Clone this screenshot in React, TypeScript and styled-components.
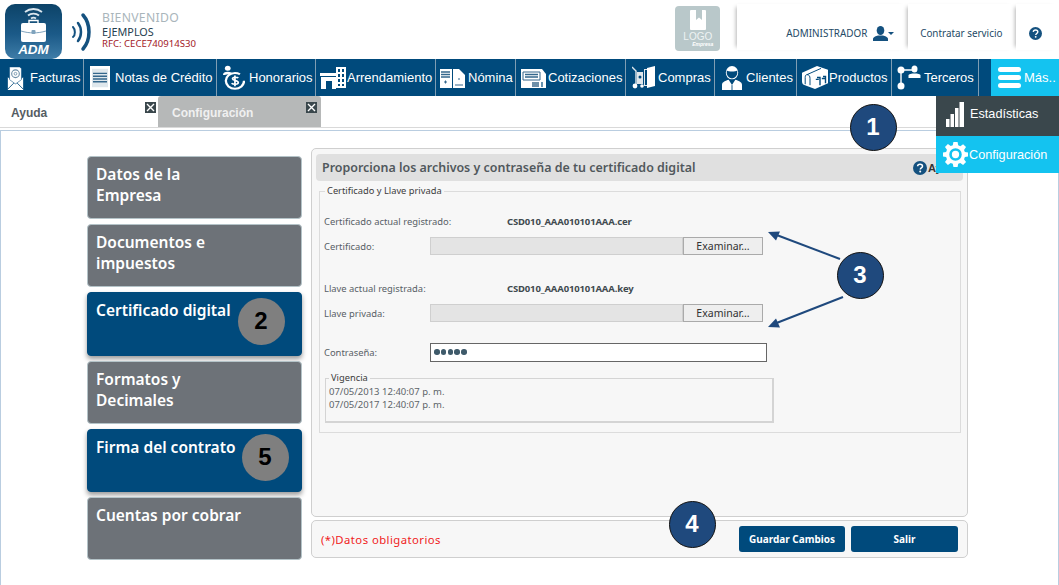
import React from "react";
import styled, { createGlobalStyle } from "styled-components";

const Global = createGlobalStyle`
  html, body { margin: 0; padding: 0; background: #fff; }
  #root { width: 1059px; height: 585px; overflow: hidden; }
  * { box-sizing: border-box; }
`;

const Page = styled.div`
  position: relative;
  width: 1059px;
  height: 585px;
  overflow: hidden;
  background: #fff;
  font-family: "Noto Sans", "Open Sans", sans-serif;
`;

/* ---------- header ---------- */
const Header = styled.header`
  display: flex;
  align-items: flex-start;
  height: 59px;
  padding: 4px 0 0 5px;
`;
const Brand = styled.div`
  width: 57px;
  height: 55px;
  border-radius: 10px;
  background: linear-gradient(#0c4368, #1b5a88 55%, #3f7da8);
`;
const Waves = styled.svg`
  margin: 8px 0 0 10px;
  width: 22px;
  height: 40px;
`;
const Welcome = styled.div`
  display: flex;
  flex-direction: column;
  margin: 7px 0 0 8px;
  width: 574px;
`;
const Hello = styled.span`
  font-size: 12.2px;
  line-height: 14px;
  color: #a9b5bb;
  letter-spacing: 0.3px;
`;
const Company = styled.span`
  font-size: 10.8px;
  line-height: 13px;
  color: #26404f;
`;
const Rfc = styled.span`
  font-size: 9.6px;
  line-height: 12px;
  color: #a3201f;
`;
const LogoBox = styled.div`
  display: flex;
  flex-direction: column;
  align-items: center;
  width: 45px;
  height: 45px;
  margin-top: 2px;
  padding-top: 4px;
  border-radius: 4px;
  background: #b9c8ca;
  color: #fff;
`;
const LogoText = styled.span`
  font-family: "Liberation Sans", sans-serif;
  font-size: 10px;
  line-height: 11px;
  margin-top: 1px;
  color: #eef3f3;
`;
const LogoSub = styled.span`
  font-family: "Liberation Sans", sans-serif;
  font-size: 5px;
  line-height: 5px;
  font-weight: 700;
  font-style: italic;
  align-self: flex-end;
  margin-right: 7px;
`;
const HeaderCell = styled.div<{ $w: number; $pad: number }>`
  display: flex;
  align-items: center;
  width: ${(p) => p.$w}px;
  height: 46px;
  padding: 12px 0 0 ${(p) => p.$pad}px;
  font-size: 9.9px;
  color: #244a66;
  white-space: nowrap;
  box-shadow: -4px 0 4px -3px #b5b5b5;
`;
const FirstCell = styled(HeaderCell)`
  margin-left: 17px;
`;
const UserSpacer = styled.span`
  width: 6px;
`;

/* ---------- nav ---------- */
const Nav = styled.nav`
  display: flex;
  height: 37px;
  background: #004a7c;
`;
const NavItem = styled.div<{ $w: number; $pad: number; $gap: number }>`
  display: flex;
  align-items: center;
  gap: ${(p) => p.$gap}px;
  width: ${(p) => p.$w}px;
  padding-left: ${(p) => p.$pad}px;
  border-right: 1px solid #7f9db3;
  color: #fff;
  font-family: "Liberation Sans", sans-serif;
  font-size: 13px;
  white-space: nowrap;
`;
const NavGap = styled.div`
  width: 12px;
`;
const MoreItem = styled.div`
  display: flex;
  align-items: center;
  gap: 3px;
  width: 68px;
  padding-left: 7px;
  background: #14c3f0;
  color: #fff;
  font-family: "Liberation Sans", sans-serif;
  font-size: 13px;
`;

/* ---------- dropdown ---------- */
const Dropdown = styled.div`
  position: absolute;
  left: 936px;
  top: 96px;
  width: 123px;
  z-index: 5;
`;
const DropItem = styled.div<{ $active?: boolean }>`
  display: flex;
  align-items: center;
  gap: ${(p) => (p.$active ? 1 : 6)}px;
  height: ${(p) => (p.$active ? 37 : 40)}px;
  padding: 0 0 ${(p) => (p.$active ? 0 : 4)}px ${(p) => (p.$active ? 7 : 10)}px;
  background: ${(p) => (p.$active ? "#14c3f0" : "#3a474c")};
  color: #fff;
  font-family: "Liberation Sans", sans-serif;
  font-size: 12.7px;
`;

/* ---------- tabs ---------- */
const Tabs = styled.div`
  display: flex;
  height: 32px;
  border-bottom: 1px solid #d9d9d9;
`;
const Tab = styled.div<{ $active?: boolean }>`
  position: relative;
  width: ${(p) => (p.$active ? 163 : 158)}px;
  padding: 10px 0 0 ${(p) => (p.$active ? 14 : 11)}px;
  border-radius: 3px 3px 0 0;
  background: ${(p) => (p.$active ? "#b6b8b8" : "#fff")};
  color: ${(p) => (p.$active ? "#f0f0f0" : "#555d63")};
  font-family: "Liberation Sans", sans-serif;
  font-size: 12px;
  font-weight: 700;
`;
const TabClose = styled.span<{ $right: number }>`
  position: absolute;
  right: ${(p) => p.$right}px;
  top: 6px;
  display: flex;
  align-items: center;
  justify-content: center;
  width: 11px;
  height: 11px;
  background: #3a474c;
`;

/* ---------- content ---------- */
const Frame = styled.div`
  margin-top: 2px;
  height: 455px;
  display: flex;
  padding: 17px 0 0 86px;
  border: 1px solid #b9cde0;
  border-bottom: none;
`;
const Side = styled.aside`
  display: flex;
  flex-direction: column;
  gap: 5px;
  width: 215px;
  padding-top: 8px;
`;
const SideBtn = styled.div<{ $active?: boolean }>`
  height: 63.2px;
  padding: 7px 8px;
  border-radius: 4px;
  border: 1px solid ${(p) => (p.$active ? "#004a7c" : "#b4c3c8")};
  background: ${(p) => (p.$active ? "#004a7c" : "#6d7278")};
  box-shadow: ${(p) => (p.$active ? "0 3px 5px rgba(0,0,0,.4)" : "none")};
  color: #fff;
  font-size: 15.5px;
  line-height: 21px;
  font-weight: 600;
  white-space: pre-line;
`;
const Column = styled.div`
  display: flex;
  flex-direction: column;
  gap: 3px;
  width: 657px;
  margin-left: 9px;
`;
const Panel = styled.section`
  height: 369px;
  padding: 5px 4px 0 4px;
  border: 1px solid #cfcfcf;
  border-radius: 5px;
  background: #f7f7f7;
`;
const TitleBar = styled.div`
  display: flex;
  align-items: center;
  justify-content: space-between;
  height: 27px;
  padding: 0 0 0 6px;
  border-radius: 4px;
  background: #e0e0e0;
`;
const Title = styled.h2`
  margin: 0;
  font-size: 12.45px;
  font-weight: 600;
  color: #51585c;
  white-space: nowrap;
`;
const HelpLink = styled.span`
  display: flex;
  align-items: center;
  gap: 1px;
  width: 50px;
  font-family: "Liberation Sans", sans-serif;
  font-size: 11px;
  font-weight: 700;
  color: #333;
`;
const Set = styled.fieldset`
  height: 248px;
  margin: 4px 2px 0 3px;
  padding: 0 4px;
  border: 1px solid #dcdcdc;
  min-width: 0;
`;
const Legend = styled.legend<{ $ml: number }>`
  padding: 0 2px;
  margin-left: ${(p) => p.$ml}px;
  font-size: 9.3px;
  line-height: 12px;
  color: #3c3c3c;
`;
const Row = styled.div<{ $mt: number }>`
  display: flex;
  align-items: center;
  height: 18px;
  margin-top: ${(p) => p.$mt}px;
`;
const Label = styled.span<{ $w: number }>`
  width: ${(p) => p.$w}px;
  font-size: 9.4px;
  color: #586066;
  white-space: nowrap;
`;
const Value = styled.span`
  font-size: 9.5px;
  font-weight: 700;
  color: #414a4f;
  letter-spacing: -0.15px;
`;
const FileInput = styled.div`
  width: 253px;
  height: 18px;
  background: #e4e4e4;
  border: 1px solid #cfcfcf;
`;
const Browse = styled.div`
  display: flex;
  align-items: center;
  justify-content: center;
  width: 80px;
  height: 18px;
  border: 1px solid #aaa;
  background: #eee;
  font-size: 10.5px;
  color: #333;
`;
const Password = styled.div`
  display: flex;
  align-items: center;
  gap: 1.3px;
  width: 337px;
  height: 19px;
  padding-left: 3px;
  border: 1px solid #666;
  background: #fff;
`;
const Dot = styled.i`
  width: 5.5px;
  height: 5.5px;
  border-radius: 50%;
  background: #3e5a6a;
`;
const Validity = styled.fieldset`
  width: 449px;
  height: 51px;
  margin: 11px 0 0 1px;
  padding: 1px 3px 0;
  border: 1px solid #d4d4d4;
  border-width: 1px 2px 2px 1px;
  min-width: 0;
`;
const ValidityLine = styled.div`
  font-size: 9.5px;
  line-height: 13px;
  color: #5d6469;
`;
const Footer = styled.div`
  display: flex;
  align-items: center;
  justify-content: space-between;
  height: 38px;
  padding: 0 9px;
  border: 1px solid #cfcfcf;
  border-radius: 5px;
  background: #f7f7f7;
`;
const Required = styled.span`
  font-size: 11.3px;
  letter-spacing: 0.45px;
  color: #f01c1c;
`;
const Actions = styled.div`
  display: flex;
  gap: 6px;
  margin-top: -1px;
`;
const ActionBtn = styled.div<{ $w: number }>`
  display: flex;
  align-items: center;
  justify-content: center;
  width: ${(p) => p.$w}px;
  height: 26px;
  border-radius: 3px;
  background: #004a7c;
  color: #fff;
  font-size: 10px;
  font-weight: 700;
`;

/* ---------- annotations ---------- */
const Marker = styled.div<{ $x: number; $y: number }>`
  position: absolute;
  left: ${(p) => p.$x - 23.5}px;
  top: ${(p) => p.$y - 23.5}px;
  display: flex;
  align-items: center;
  justify-content: center;
  width: 47px;
  height: 47px;
  border-radius: 50%;
  border: 1px solid #111;
  background: #1f497d;
  color: #fff;
  font-family: "Liberation Sans", sans-serif;
  font-size: 24px;
  font-weight: 700;
  z-index: 6;
`;
const GreyMarker = styled(Marker)`
  border: none;
  background: #7f7f7f;
  color: #000;
`;
const Arrows = styled.svg`
  position: absolute;
  left: 760px;
  top: 225px;
  width: 90px;
  height: 110px;
  z-index: 4;
`;

/* ---------- icons ---------- */
const Ic = styled.svg`
  flex: none;
  display: block;
`;

const IconFacturas = () => (
  <Ic width="17" height="24" viewBox="0 0 20 28">
    <path d="M1 13 L10 21 L19 13 V28 H1Z" fill="#fff" />
    <path d="M1 27 L8 20 M19 27 L12 20" stroke="#004a7c" fill="none" />
    <path d="M3 1h12l2 2v13l-7 5-7-5z" fill="#fff" stroke="#004a7c" strokeWidth=".6" />
    <circle cx="10" cy="9" r="4.500" fill="none" stroke="#6d8fa8" strokeWidth="1.300" />
    <circle cx="10" cy="9" r="1.600" fill="none" stroke="#6d8fa8" />
  </Ic>
);
const IconNotas = () => (
  <Ic width="20" height="24" viewBox="0 0 20 26" preserveAspectRatio="none">
    <rect x="0" y="0" width="20" height="26" fill="#fff" />
    <rect x="2" y="3" width="16" height="20" fill="#dfe7ec" />
    <path d="M3 8h14M3 11h14M3 14h14M3 17h14" stroke="#34678c" strokeWidth="1.600" />
  </Ic>
);
const IconHonorarios = () => (
  <Ic width="23" height="25" viewBox="0 0 24 30" preserveAspectRatio="none">
    <circle cx="6" cy="4" r="3" fill="#fff" />
    <path d="M1 12c0-3 2-4 5-4s5 1 5 3H6c-1 0-3 1-5 1z" fill="#fff" />
    <circle cx="13.500" cy="19" r="9.500" fill="none" stroke="#fff" strokeWidth="2.400" strokeDasharray="50 10" />
    <path d="M17 15.500c-1-1.200-6-1.500-6 1s6 1.800 6 4.600-5.500 2.400-7 .8M13.500 12.500v13" stroke="#fff" strokeWidth="1.800" fill="none" />
  </Ic>
);
const IconArrendamiento = () => (
  <Ic width="26" height="22" viewBox="0 0 26 22">
    <path d="M0 6h16v3H0z" fill="#fff" />
    <path d="M1 10h15v12h-4v-8H6v8H1z" fill="#fff" />
    <path d="M16 0h10v21H16z" fill="#fff" />
    <path d="M18 2h2v3h-2zM22 2h2v3h-2zM18 7h2v3h-2zM22 7h2v3h-2zM18 12h2v3h-2zM22 12h2v3h-2zM18 17h2v2h-2zM22 17h2v2h-2z" fill="#004a7c" />
  </Ic>
);
const IconNomina = () => (
  <Ic width="25" height="20" viewBox="0 0 25 20">
    <path d="M0 1h19l6 6v13H0z" fill="#fff" />
    <path d="M1 4h9M1 6.500h9M1 9h9" stroke="#34678c" strokeWidth="1.400" />
    <path d="M12.500 1v19" stroke="#004a7c" />
    <path d="M15 17h8M18 11h2M4 14h3M5.500 12.500v3" stroke="#34678c" />
  </Ic>
);
const IconCotizaciones = () => (
  <Ic width="25" height="20" viewBox="0 0 25 20">
    <path d="M0 1h21l4 5v14H0z" fill="#fff" />
    <path d="M2 4h17v8H2z" fill="none" stroke="#34678c" />
    <path d="M4 6.500h13M4 9h13" stroke="#34678c" strokeWidth="1.300" />
    <path d="M11 14h7v5h-7z" fill="#6d8fa8" />
    <path d="M21 14v5" stroke="#004a7c" strokeWidth="1.200" />
  </Ic>
);
const IconCompras = () => (
  <Ic width="23" height="23" viewBox="0 0 23 23">
    <path d="M15 2l8-2v20l-8 2z" fill="#fff" />
    <path d="M12 3h3v1h-2v15h2v1h-3z" fill="#dfe7ec" />
    <path d="M0 1l4 4v13" stroke="#dfe7ec" strokeWidth="1.400" fill="none" />
    <path d="M5 6h6v12H5z" fill="#dfe7ec" />
    <circle cx="8" cy="11" r="1.500" fill="#004a7c" />
    <circle cx="3" cy="20" r="2.400" fill="#fff" />
    <circle cx="10" cy="20" r="1.800" fill="#fff" />
  </Ic>
);
const IconClientes = () => (
  <Ic width="20" height="24" viewBox="0 0 21 27" preserveAspectRatio="none">
    <ellipse cx="10.500" cy="7.500" rx="6.500" ry="7.500" fill="#fff" />
    <path d="M5 5c2 1.500 9 1.500 11 0v4c-1 3-3 5-5.500 5S6 12 5 9z" fill="#004a7c" />
    <path d="M0 27v-6c0-3 4-4.500 7-5.500l3.500 6 3.500-6c3 1 7 2.500 7 5.500v6z" fill="#fff" />
    <path d="M10.500 21.500v5.500" stroke="#004a7c" />
  </Ic>
);
const IconProductos = () => (
  <Ic width="26" height="23" viewBox="0 0 26 24" preserveAspectRatio="none">
    <path d="M0 7L15 0l11 4v14l-13 6L3 20C1 20 0 18 0 16z" fill="#fff" />
    <path d="M5 9l14-6.500M5 9c-1 0-1.800.8-1.800 3v7M5 9c2 0 3 1.500 3 4v7" stroke="#004a7c" strokeWidth="1" fill="none" />
    <path d="M15 12h3v8M21 11h2.500v7M13.800 14h3M19.800 13h3" stroke="#004a7c" strokeWidth="1.400" fill="none" />
  </Ic>
);
const IconTerceros = () => (
  <Ic width="25" height="25" viewBox="0 0 25 25">
    <path d="M4 5h12M4 5v15" stroke="#fff" strokeWidth="1.400" />
    <circle cx="4" cy="5" r="3.500" fill="#fff" />
    <circle cx="4" cy="21" r="3.500" fill="#fff" />
    <ellipse cx="17.500" cy="4" rx="3" ry="3.500" fill="#fff" />
    <path d="M11.500 13v-2.500c0-1.500 3-2 6-2s6 .5 6 2V13z" fill="#fff" />
  </Ic>
);
const IconMenu = () => (
  <Ic width="23" height="21" viewBox="0 0 23 21">
    <rect width="23" height="5" rx="2.500" fill="#fff" />
    <rect y="8" width="23" height="5" rx="2.500" fill="#fff" />
    <rect y="16" width="23" height="5" rx="2.500" fill="#fff" />
  </Ic>
);
const IconBars = () => (
  <Ic width="18" height="25" viewBox="0 0 18 25">
    <path d="M0 17h3.500v8H0zM4.500 12H8v13H4.500zM9 6h3.500v19H9zM13.500 0H18v25h-4.500z" fill="#fff" />
  </Ic>
);
const IconGear = () => (
  <Ic width="25" height="25" viewBox="0 0 24 24">
    <path
      fill="#fff"
      fillRule="evenodd"
      d="M10 0h4l.6 3.200 2 .8L19.300 2.100l2.800 2.800L20.200 7.600l.8 2L24 10v4l-3 .5-.8 2 1.900 2.700-2.800 2.800-2.700-1.900-2 .8L14 24h-4l-.6-3.100-2-.8-2.700 1.900-2.800-2.800 1.900-2.700-.8-2L0 14v-4l3-.5.8-2-1.900-2.700 2.800-2.800 2.700 1.900 2-.8zM12 6a6 6 0 100 12 6 6 0 000-12zm0 2.500a3.500 3.500 0 110 7 3.500 3.500 0 010-7z"
    />
  </Ic>
);
const IconUser = () => (
  <Ic width="15" height="15" viewBox="0 0 15 15">
    <ellipse cx="7.500" cy="4.500" rx="3.800" ry="4.500" fill="#14517f" />
    <path d="M0 15v-2c0-2 3-3 5-3.500h5c2 .5 5 1.500 5 3.500v2z" fill="#14517f" />
  </Ic>
);
const IconCaret = () => (
  <Ic width="6" height="3" viewBox="0 0 6 3">
    <path d="M0 0h6L3 3z" fill="#14517f" />
  </Ic>
);
const IconHelp = ({ size }: { size: number }) => (
  <Ic width={size} height={size} viewBox="0 0 14 14">
    <circle cx="7" cy="7" r="7" fill="#14517f" />
    <path d="M4.600 5.300C4.700 3.900 5.700 3.200 7 3.200c1.400 0 2.500.8 2.500 2 0 1.800-2.200 1.700-2.200 3.300" fill="none" stroke="#fff" strokeWidth="1.500" />
    <circle cx="7.200" cy="10.600" r="1" fill="#fff" />
  </Ic>
);
const IconX = () => (
  <Ic width="9" height="9" viewBox="0 0 9 9">
    <path d="M1 1l7 7M8 1L1 8" stroke="#fff" strokeWidth="1.400" />
  </Ic>
);
const BrandArt = () => (
  <svg width="57" height="55" viewBox="0 0 57 55">
    <g fill="none" stroke="#dbe6ee" strokeWidth="1.800">
      <path d="M20 8c5-4 12-4 17 0" />
      <path d="M23 11.500c3-2.500 8-2.500 11 0" />
      <path d="M26 14.500c1.500-1 3.500-1 5 0" />
    </g>
    <path d="M24 19v-2.500h9V19" fill="none" stroke="#fff" strokeWidth="1.400" />
    <rect x="16" y="19" width="25" height="19" rx="2" fill="#fff" />
    <path d="M16 27c8 2.500 17 2.500 25 0" stroke="#7fa3bd" fill="none" />
    <rect x="26.500" y="26" width="4" height="4" rx="1" fill="#7fa3bd" />
    <text x="28.500" y="50" textAnchor="middle" fill="#fff" fontFamily="Liberation Sans" fontStyle="italic" fontWeight="700" fontSize="13.500">ADM</text>
  </svg>
);

const navItems: { label: string; w: number; pad: number; gap: number; icon: React.ReactNode }[] = [
  { label: "Facturas", w: 84, pad: 7, gap: 6, icon: <IconFacturas /> },
  { label: "Notas de Crédito", w: 133, pad: 6, gap: 5, icon: <IconNotas /> },
  { label: "Honorarios", w: 99, pad: 5, gap: 4, icon: <IconHonorarios /> },
  { label: "Arrendamiento", w: 120, pad: 4, gap: 1, icon: <IconArrendamiento /> },
  { label: "Nómina", w: 80, pad: 4, gap: 3, icon: <IconNomina /> },
  { label: "Cotizaciones", w: 110, pad: 5, gap: 2, icon: <IconCotizaciones /> },
  { label: "Compras", w: 89, pad: 6, gap: 3, icon: <IconCompras /> },
  { label: "Clientes", w: 82, pad: 7, gap: 4, icon: <IconClientes /> },
  { label: "Productos", w: 95, pad: 5, gap: 1, icon: <IconProductos /> },
  { label: "Terceros", w: 87, pad: 5, gap: 2, icon: <IconTerceros /> },
];

const sideItems = [
  { label: "Datos de la\nEmpresa" },
  { label: "Documentos e\nimpuestos" },
  { label: "Certificado digital", active: true },
  { label: "Formatos y\nDecimales" },
  { label: "Firma del contrato", active: true },
  { label: "Cuentas por cobrar" },
];

export default function App() {
  return (
    <Page>
      <Global />
      <Header>
        <Brand>
          <BrandArt />
        </Brand>
        <Waves viewBox="0 0 22 40">
          <g fill="none" stroke="#14517f" strokeLinecap="round">
            <path d="M1 15c2.500 2.500 2.500 8 0 10" strokeWidth="2" />
            <path d="M6 11c4 5 4 13 0 18" strokeWidth="2.500" />
            <path d="M11 3c8 9 8 25 0 34" strokeWidth="3.500" />
          </g>
        </Waves>
        <Welcome>
          <Hello>BIENVENIDO</Hello>
          <Company>EJEMPLOS</Company>
          <Rfc>RFC: CECE740914S30</Rfc>
        </Welcome>
        <LogoBox>
          <Ic width="16" height="20" viewBox="0 0 16 20">
            <path d="M1 0h14a1 1 0 011 1v18a1 1 0 01-1 1H1a1 1 0 01-1-1V1a1 1 0 011-1z" fill="#fff" />
            <path d="M6 0h6v10l-3-2.500L6 10z" fill="#b9c8ca" />
          </Ic>
          <LogoText>LOGO</LogoText>
          <LogoSub>Empresa</LogoSub>
        </LogoBox>
        <FirstCell $w={171} $pad={49}>
          ADMINISTRADOR
          <UserSpacer />
          <IconUser />
          <IconCaret />
        </FirstCell>
        <HeaderCell $w={108} $pad={12}>Contratar servicio</HeaderCell>
        <HeaderCell $w={43} $pad={13}>
          <IconHelp size={13} />
        </HeaderCell>
      </Header>

      <Nav>
        {navItems.map((n) => (
          <NavItem key={n.label} $w={n.w} $pad={n.pad} $gap={n.gap}>
            {n.icon}
            {n.label}
          </NavItem>
        ))}
        <NavGap />
        <MoreItem>
          <IconMenu />
          Más..
        </MoreItem>
      </Nav>

      <Dropdown>
        <DropItem>
          <IconBars />
          Estadísticas
        </DropItem>
        <DropItem $active>
          <IconGear />
          Configuración
        </DropItem>
      </Dropdown>

      <Tabs>
        <Tab>
          Ayuda
          <TabClose $right={2}><IconX /></TabClose>
        </Tab>
        <Tab $active>
          Configuración
          <TabClose $right={4}><IconX /></TabClose>
        </Tab>
      </Tabs>

      <Frame>
        <Side>
          {sideItems.map((s) => (
            <SideBtn key={s.label} $active={s.active}>{s.label}</SideBtn>
          ))}
        </Side>
        <Column>
          <Panel>
            <TitleBar>
              <Title>Proporciona los archivos y contraseña de tu certificado digital</Title>
              <HelpLink>
                <IconHelp size={14} />
                Ayuda
              </HelpLink>
            </TitleBar>
            <Set>
              <Legend $ml={1}>Certificado y Llave privada</Legend>
              <Row $mt={15}>
                <Label $w={183}>Certificado actual registrado:</Label>
                <Value>CSD010_AAA010101AAA.cer</Value>
              </Row>
              <Row $mt={7}>
                <Label $w={106}>Certificado:</Label>
                <FileInput />
                <Browse>Examinar...</Browse>
              </Row>
              <Row $mt={24}>
                <Label $w={183}>Llave actual registrada:</Label>
                <Value>CSD010_AAA010101AAA.key</Value>
              </Row>
              <Row $mt={7}>
                <Label $w={106}>Llave privada:</Label>
                <FileInput />
                <Browse>Examinar...</Browse>
              </Row>
              <Row $mt={21}>
                <Label $w={106}>Contraseña:</Label>
                <Password>
                  <Dot /><Dot /><Dot /><Dot /><Dot />
                </Password>
              </Row>
              <Validity>
                <Legend $ml={0}>Vigencia</Legend>
                <ValidityLine>07/05/2013 12:40:07 p. m.</ValidityLine>
                <ValidityLine>07/05/2017 12:40:07 p. m.</ValidityLine>
              </Validity>
            </Set>
          </Panel>
          <Footer>
            <Required>(*)Datos obligatorios</Required>
            <Actions>
              <ActionBtn $w={106}>Guardar Cambios</ActionBtn>
              <ActionBtn $w={107}>Salir</ActionBtn>
            </Actions>
          </Footer>
        </Column>
      </Frame>

      <Arrows viewBox="0 0 90 110">
        <path d="M80 34L14 9" stroke="#1f497d" strokeWidth="2" />
        <path d="M8 7l12-.5-4 9z" fill="#1f497d" />
        <path d="M83 72L14 99" stroke="#1f497d" strokeWidth="2" />
        <path d="M8 102l12 .5-4-9z" fill="#1f497d" />
      </Arrows>
      <Marker $x={873} $y={127}>1</Marker>
      <GreyMarker $x={261} $y={321}>2</GreyMarker>
      <Marker $x={860} $y={275}>3</Marker>
      <Marker $x={692} $y={524}>4</Marker>
      <GreyMarker $x={265} $y={457}>5</GreyMarker>
    </Page>
  );
}
